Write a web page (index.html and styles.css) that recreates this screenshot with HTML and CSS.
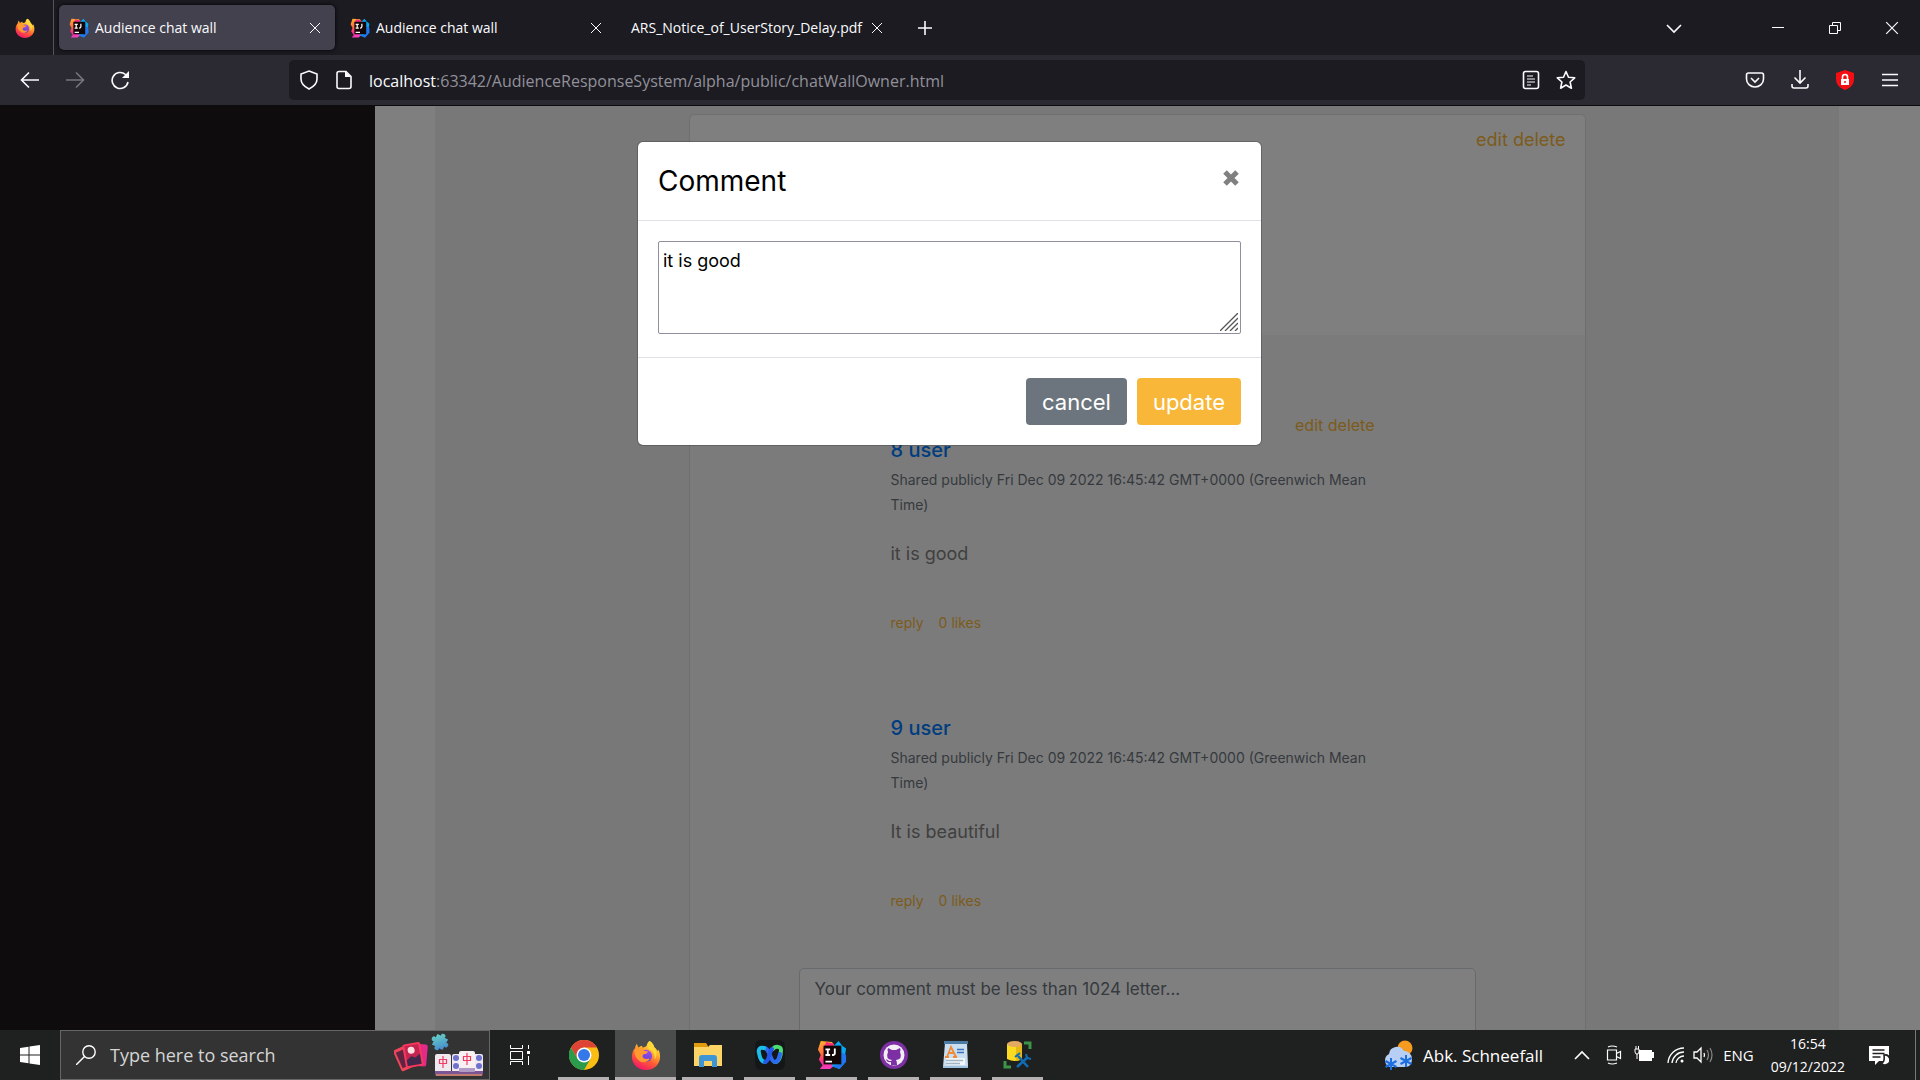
FILE: index.html
```html
<!DOCTYPE html>
<html lang="en">
<head>
<meta charset="utf-8">
<title>Audience chat wall</title>
<link rel="stylesheet" href="styles.css">
</head>
<body>
<svg class="defs" aria-hidden="true">
  <defs>
    <linearGradient id="ff-body" x1=".8" y1="0" x2=".3" y2="1"><stop offset="0" stop-color="#fff14a"/><stop offset=".35" stop-color="#ffb02e"/><stop offset=".65" stop-color="#ff5a36"/><stop offset="1" stop-color="#f0146b"/></linearGradient>
    <linearGradient id="ff-globe" x1=".7" y1="0" x2=".3" y2="1"><stop offset="0" stop-color="#a04cf0"/><stop offset="1" stop-color="#5a3fd0"/></linearGradient>
    <linearGradient id="ij-left" x1=".3" y1="0" x2=".4" y2="1"><stop offset="0" stop-color="#ffb02e"/><stop offset=".45" stop-color="#ff6a3d"/><stop offset=".7" stop-color="#fb2c8c"/><stop offset="1" stop-color="#f43fc0"/></linearGradient>
    <linearGradient id="puzzle" x1="0" y1="0" x2="1" y2="1"><stop offset="0" stop-color="#6fe0c4"/><stop offset="1" stop-color="#3c78d0"/></linearGradient>
    <symbol id="firefox" viewBox="0 0 32 32">
      <path fill="url(#ff-body)" d="M20 1c3 2 4 4 5 7 2 1 3 3 3 4l1-2c2 3 2 6 2 8 0 8-7 14-15 14S1 26 1 18c0-4 1-7 3-9l1-3 1-2 2 4c1-1 3-2 4-2 0 1 0 2 1 2 2-1 4-1 4-3 0-1 1-3 3-4z"/>
      <circle cx="16" cy="17" r="6.500" fill="url(#ff-globe)"/>
      <path fill="#ff9a2f" d="M4 10c3-2 6-2 8 0 1 1 3 2 6 2 0 2-2 3-4 3-2 1-2 3-1 4 2 2 5 1 7 1-2 4-8 5-11 2-4-3-6-7-5-12z"/>
      <path fill="#ffd83a" d="M20 1c3 2 4 4 5 7 3 4 3 9 0 13 1-5-1-9-5-11-3-2-3-6 0-9z"/>
    </symbol>
    <symbol id="intellij" viewBox="0 0 32 32">
      <path fill="url(#ij-left)" d="M4 1l12 1 4 6v18l-5 4-1 1H3l3-4-4-6 2-5-3-6z"/>
      <path fill="#fb2c7c" d="M10 2l8 2-1 6H6z"/>
      <path fill="#07a9f5" d="M18 6l5-5 4 5 4 3-1 7 1 7-7 8-8-3z"/>
      <path fill="#2175f3" d="M26 13l5 3v7l-7 8-8-3 10-3z"/>
      <path fill="#120607" d="M7 6h19v20H7z"/>
      <path stroke="#fff" fill="none" d="M9 10h5M11.500 10v6M9 16h5M19 9v5q0 2-3 2M9 23h7"/>
    </symbol>
    <symbol id="close" viewBox="0 0 12 12"><path d="M1 1l10 10M11 1L1 11" fill="none" stroke="currentColor"/></symbol>
  </defs>
</svg>

<header class="tabbar">
  <div class="fxview"><svg class="i20"><use href="#firefox"/></svg></div>
  <div class="tabs">
    <div class="tab active"><svg class="i20"><use href="#intellij"/></svg><span class="tabname">Audience chat wall</span><button class="tabclose" aria-label="Close tab"><svg class="i12"><use href="#close"/></svg></button></div>
    <div class="tab"><svg class="i20"><use href="#intellij"/></svg><span class="tabname">Audience chat wall</span><button class="tabclose" aria-label="Close tab"><svg class="i12"><use href="#close"/></svg></button></div>
    <div class="tab"><span class="tabname">ARS_Notice_of_UserStory_Delay.pdf</span><button class="tabclose" aria-label="Close tab"><svg class="i12"><use href="#close"/></svg></button></div>
  </div>
  <button class="iconbtn newtab" aria-label="New tab"><svg class="i16" viewBox="0 0 16 16"><path d="M8 1v14M1 8h14"/></svg></button>
  <button class="iconbtn alltabs" aria-label="List all tabs"><svg class="i16" viewBox="0 0 16 16"><path d="M1 5l7 7 7-7"/></svg></button>
  <div class="winbtns">
    <button class="iconbtn" aria-label="Minimize"><svg class="i12" viewBox="0 0 12 12"><path d="M0 5.500h12" stroke-width="1"/></svg></button>
    <button class="iconbtn" aria-label="Restore"><svg class="i12" viewBox="0 0 12 12"><path d="M.5 3.500h8v8h-8zM3.500 3V.5h8v8H9" stroke-width="1"/></svg></button>
    <button class="iconbtn" aria-label="Close window"><svg class="i14"><use href="#close"/></svg></button>
  </div>
</header>

<nav class="navbar">
  <button class="iconbtn" aria-label="Back"><svg class="i20" viewBox="0 0 20 20"><path d="M19 10H2M9 2.500L1.500 10 9 17.500"/></svg></button>
  <button class="iconbtn dim" aria-label="Forward"><svg class="i20" viewBox="0 0 20 20"><path d="M1 10h17M11 2.500l7.500 7.500-7.500 7.500"/></svg></button>
  <button class="iconbtn" aria-label="Reload"><svg class="i20" viewBox="0 0 20 20"><path d="M18 12a8 8 0 1 1-2.500-7.500L18 7"/><path d="M19 1v7h-7z" fill="currentColor" stroke="none"/></svg></button>
  <div class="spacer"></div>
  <div class="urlbar">
    <svg class="i20" viewBox="0 0 20 20"><path d="M10 1l8 3v5c0 5-4 8-8 10-4-2-8-5-8-10V4z"/></svg>
    <svg class="i20" viewBox="0 0 20 20"><path d="M5 1.500h7l5 5v10q0 2-2 2H5q-2 0-2-2v-13q0-2 2-2z"/><path d="M11 1l6 6h-6z" fill="currentColor" stroke="none"/></svg>
    <div class="url"><b>localhost</b>:63342/AudienceResponseSystem/alpha/public/chatWallOwner.html</div>
    <svg class="i20 reader" viewBox="0 0 20 20"><rect x="2.500" y="1.500" width="15" height="17" rx="2"/><path d="M6 6h6M6 9h8M6 12h8M6 15h4" stroke-width="1.200"/></svg>
    <svg class="i20" viewBox="0 0 20 20"><path d="M10 1.500l2.500 5.700 6.200.6-4.600 4.200 1.300 6.200-5.400-3.200-5.400 3.200 1.300-6.200L1.300 7.800l6.200-.6z" stroke-linejoin="round"/></svg>
  </div>
  <div class="spacer"></div>
  <button class="iconbtn" aria-label="Pocket"><svg class="i20" viewBox="0 0 20 20"><path d="M3.500 3h13q2 0 2 2v4a8.500 8 0 0 1-17 0V5q0-2 2-2zM6 8l4 4 4-4"/></svg></button>
  <button class="iconbtn" aria-label="Downloads"><svg class="i20" viewBox="0 0 20 20"><path d="M10 0v13M4.500 7.500L10 13l5.500-5.500M2 14v2q0 2 2 2h12q2 0 2-2v-2"/></svg></button>
  <button class="iconbtn" aria-label="Blocker"><svg class="i20" viewBox="0 0 20 20"><path d="M10 0l9 3v6c0 6-4 9-9 11-5-2-9-5-9-11V3z" fill="#f40d12" stroke="none"/><rect x="6" y="9" width="8" height="6" fill="#fff" stroke="none"/><path d="M7.500 9V7a2.500 2.500 0 0 1 5 0v2" stroke="#fff"/><circle cx="10" cy="12" r="1" fill="#f40d12" stroke="none"/></svg></button>
  <button class="iconbtn" aria-label="Menu"><svg class="i16" viewBox="0 0 16 16"><path d="M0 2.500h16M0 8h16M0 13.500h16"/></svg></button>
</nav>

<div class="viewport">
  <aside class="sidebar"></aside>
  <main class="content">
    <div class="wall">
      <article class="card">
        <div class="cardtop"><a href="#">edit</a> <a href="#">delete</a></div>
        <div class="comments">
          <section class="comment">
            <div class="actions"><a href="#">edit</a> <a href="#">delete</a></div>
            <h6 class="name">8 user</h6>
            <p class="meta">Shared publicly Fri Dec 09 2022 16:45:42 GMT+0000 (Greenwich Mean Time)</p>
            <p class="body">it is good</p>
            <div class="links"><a href="#">reply</a><a href="#">0 likes</a></div>
          </section>
          <section class="comment">
            <div class="actions"></div>
            <h6 class="name">9 user</h6>
            <p class="meta">Shared publicly Fri Dec 09 2022 16:45:42 GMT+0000 (Greenwich Mean Time)</p>
            <p class="body">It is beautiful</p>
            <div class="links"><a href="#">reply</a><a href="#">0 likes</a></div>
          </section>
          <textarea class="newcomment" aria-label="New comment" placeholder="Your comment must be less than 1024 letter..."></textarea>
        </div>
      </article>
    </div>
  </main>
  <div class="backdrop">
    <div class="modal" role="dialog" aria-labelledby="modal-title">
      <div class="modalhead"><h5 id="modal-title">Comment</h5><button class="modalclose" aria-label="Close"><svg class="i20" viewBox="0 0 20 20"><path d="M4 4l12 12M16 4L4 16" stroke-width="5"/></svg></button></div>
      <div class="modalbody">
        <div class="field"><textarea aria-label="Comment text">it is good</textarea><svg class="grip" viewBox="0 0 18 18"><path d="M0 18L18 0M5 18L18 5M10 18l8-8M15 18l3-3"/></svg></div>
      </div>
      <div class="modalfoot"><button class="btn grey">cancel</button><button class="btn amber">update</button></div>
    </div>
  </div>
</div>

<footer class="taskbar">
  <button class="start" aria-label="Start"><svg class="i20" viewBox="0 0 20 20"><path d="M0 3l8.500-1.200v7.700H0zM9.500 1.600L20 0v9.500H9.500zM0 10.500h8.500v7.700L0 17zM9.500 10.500H20V20L9.500 18.400z" fill="#fff" stroke="none"/></svg></button>
  <label class="search">
    <svg class="i20" viewBox="0 0 20 20"><circle cx="13" cy="7" r="6.200"/><path d="M8.500 11.500L0 20"/></svg>
    <input type="text" placeholder="Type here to search">
    <svg class="games" viewBox="0 0 90 44">
      <rect x="17" y="11" width="16" height="22" rx="2" fill="#e32a88" transform="rotate(5 25 22)"/>
      <rect x="3" y="14" width="15" height="23" rx="2" fill="#f0455a" transform="rotate(-24 10 26)"/><rect x="5" y="17" width="11" height="17" fill="#5e2442" transform="rotate(-24 10 26)"/>
      <g transform="rotate(-10 19 22)"><rect x="10" y="10" width="18" height="24" rx="2" fill="#f5395c"/><rect x="12" y="12" width="14" height="20" fill="#c42452"/><path d="M12 26l5-3 4 2 5-3v10H12z" fill="#40284a"/><circle cx="18" cy="17" r="3.500" fill="#ffdfe0"/></g>
      <g transform="rotate(28 46 9)" fill="url(#puzzle)"><path d="M40 3h4c-2-4 6-4 4 0h4v4c4-2 4 6 0 4v4h-4c2 4-6 4-4 0h-4v-4c-4 2-4-6 0-4z"/></g>
      <g fill="#efe8ee"><rect x="41" y="21" width="16" height="20" rx="2"/><rect x="58" y="21" width="14" height="20" rx="2"/><rect x="74" y="21" width="15" height="20" rx="2"/></g>
      <path d="M41 38h48v3q0 2-2 2H43q-2 0-2-2z" fill="#7c5594"/><path d="M42 42h46" stroke="#d98a60"/>
      <g fill="#6d72cf"><circle cx="62" cy="25" r="3"/><circle cx="62" cy="33" r="3"/><circle cx="85" cy="25" r="3"/><circle cx="85" cy="33" r="3"/></g>
      <rect x="65" y="18" width="16" height="20" rx="2" fill="#f7f1f4"/><path d="M65 35h16v3q0 1-1 1H66q-1 0-1-1z" fill="#b09ac6"/>
      <path d="M45.500 26.500h7v4h-7zM49 23v12M69.500 23.500h7v4h-7zM73 20v12" stroke="#ef3d66" stroke-width="1.200" fill="none"/>
    </svg>
  </label>
  <button class="taskview" aria-label="Task view"><svg class="i20" viewBox="0 0 20 20"><path d="M.5 0v3.500h12V0M.5 20v-3.500h12V20M.5 6.500h12v8H.5zM18.500 0v4M18.500 11v9" stroke-width="1"/><path d="M17 6h3v3h-3z" fill="#fff" stroke="none"/></svg></button>
  <div class="apps">
    <button class="app" aria-label="Chrome"><svg class="i30" viewBox="0 0 30 30"><circle cx="15" cy="15" r="15" fill="#fbbc14"/><path d="M2 7.500A15 15 0 0 1 28 7.500H15L8.500 18.700z" fill="#dd4436"/><path d="M2 7.500A15 15 0 0 0 15 30l6.500-11.300L15 22l-6.500-3.300z" fill="#2a9a4b"/><circle cx="15" cy="15" r="7.500" fill="#fff"/><circle cx="15" cy="15" r="6" fill="#3478ea"/></svg></button>
    <button class="app current" aria-label="Firefox"><svg class="i30"><use href="#firefox"/></svg></button>
    <button class="app" aria-label="File Explorer"><svg class="i30" viewBox="0 0 30 30"><path d="M1 3h12l2 3v4H1z" fill="#e19b0c"/><path d="M1 7h14l2-2h12v21H1z" fill="#fcd365"/><path d="M6 27V18q0-3 3-3h12q3 0 3 3v9h-5v-6h-8v6z" fill="#3e95d6"/></svg></button>
    <button class="app" aria-label="Webex"><svg class="i30" viewBox="0 0 30 30"><rect width="30" height="30" rx="6" fill="#151617"/><g fill="none" stroke-width="4" stroke-linecap="round"><path d="M18 9c2-3 8-3 8 1 0 6-2 12-6 12" stroke="#4bdc72"/><path d="M25 14c-1 5-2 8-5 8-5 0-5-14-11-14" stroke="#2b6bf3"/><path d="M9 8C5 7 3 9 4 13c1 6 3 9 6 9" stroke="#1bbde9"/><path d="M10 22c4 0 4-10 7-13" stroke="#2456e8"/></g></svg></button>
    <button class="app" aria-label="IntelliJ IDEA"><svg class="i30"><use href="#intellij"/></svg></button>
    <button class="app" aria-label="GitHub Desktop"><svg class="i30" viewBox="0 0 30 30"><circle cx="15" cy="15" r="14" fill="#7d2fa4"/><circle cx="15" cy="15" r="10.500" fill="#f3eef6"/><path d="M9 8l4 2h4l4-2q1 2 0 4 3 7-4 8 1 1 1 5h-6v-3q-4 1-5-3 2 1 3 2h2l1-1q-7-1-4-8-1-2 0-4z" fill="#7d2fa4"/></svg></button>
    <button class="app" aria-label="WordPad"><svg class="i30" viewBox="0 0 30 30"><path d="M4 3h22l1 23q-12 3-25 1z" fill="#c9dff1"/><path d="M3 1h24v3H3z" fill="#4b7aa5"/><path d="M6 17l4-10 5 10M8 13h5M4 17h4M12 17h4" fill="none" stroke="#f08a35" stroke-width="1.800"/><path d="M16 9.500h7M16 12.500h7" stroke="#3c72bd" stroke-width="1.500"/><path d="M5 18h19v7H5z" fill="#f2f7fb"/><path d="M5 20.500h17M5 23.500h14" stroke="#a3b4c2"/><path d="M2 26h25v2H2z" fill="#9fc2de"/></svg></button>
    <button class="app" aria-label="Database tool"><svg class="i30" viewBox="0 0 30 30"><path d="M4 4h15v15q-7 4-15 0z" fill="#fadb22"/><path d="M13 4h6v15q-3 2-6 2z" fill="#e6b912"/><ellipse cx="11.500" cy="4" rx="7.500" ry="3" fill="#e5aa62"/><path d="M21 3h6v6M2 21v6h6" fill="none" stroke="#3b9447" stroke-width="3"/><path d="M15 16l10 11M25 17L14 27" stroke="#0f6db8" stroke-width="2.500"/><path d="M12 17l5-4M23 14l1 4 4 1" fill="none" stroke="#0f6db8" stroke-width="2"/></svg></button>
  </div>
  <div class="tray">
    <svg class="i30 weather" viewBox="0 0 30 30"><circle cx="22" cy="8" r="7.500" fill="#f59b1f"/><path d="M7 27a7 7 0 0 1-1-13 8 8 0 0 1 15-3 8 8 0 0 1 8 8q0 7-6 8z" fill="#b8cff5"/><path d="M8 18v12M2.500 21l11 6M13.500 21l-11 6M23 15v12M17.500 18l11 6M28.500 18l-11 6" stroke="#1b6fe0" stroke-width="2"/></svg>
    <span class="forecast">Abk. Schneefall</span>
    <svg class="i16 up" viewBox="0 0 16 16"><path d="M1 12l7-7 7 7"/></svg>
    <svg class="i20 meet" viewBox="0 0 20 20"><path d="M3.500 5h9v10h-9zM12.500 8.500l4-2v7l-4-2M4 2q4-2 9 0M4 18q4 2 9 0" stroke-width="1.200"/></svg>
    <svg class="i20 battery" viewBox="0 0 20 20"><path d="M5 5h13v2h2v6h-2v3H5V9z" fill="#fff" stroke="none"/><path d="M1 4h4v3l-1 2H2L1 7zM3 9v5M2 4V1M4.500 4V1" stroke-width="1"/></svg>
    <svg class="i20 wifi" viewBox="0 0 20 20"><path d="M2 18A16 16 0 0 1 18 3M6 18A12 12 0 0 1 18 7M10 18a8 8 0 0 1 8-7" stroke-width="1.300"/><circle cx="16" cy="16" r="1.500" fill="#fff" stroke="none"/></svg>
    <svg class="i20 sound" viewBox="0 0 20 20"><path d="M1 7h3l4-4v14l-4-4H1zM11 8q1 2 0 4" stroke-width="1.300"/><path d="M14 5q3 5 0 10M17 3q4 7 0 14" stroke="#888" stroke-width="1.200"/></svg>
    <span class="lang">ENG</span>
    <time class="clock">16:54<br>09/12/2022</time>
    <svg class="i20 notes" viewBox="0 0 20 20"><path d="M0 1h20v15H10l-4 4v-4H0z" fill="#fff" stroke="none"/><path d="M3.500 5h12M3.500 8.500h12M3.500 12h8" stroke="#222"/><path d="M15 10a5 5 0 1 1-3 8q4 0 3-8z" fill="#fff" stroke="#222"/></svg>
  </div>
</footer>
</body>
</html>
```
FILE: styles.css
```css
* { box-sizing: border-box; }
body {
  margin: 0;
  height: 100vh;
  display: flex;
  flex-direction: column;
  overflow: hidden;
  font-family: "Open Sans", sans-serif;
  color: #fbfbfe;
  background: #1c1b22;
}
button { border: 0; padding: 0; background: none; color: inherit; font: inherit; }
a { color: #f8b739; text-decoration: none; }
h5, h6, p { margin: 0; }
svg { flex: none; fill: none; stroke: currentColor; stroke-width: 1.600; display: block; }
symbol path, symbol circle { stroke-width: 0; }
#intellij path[stroke] { stroke-width: 2; }
#close path { stroke-width: 1; }
.defs { position: absolute; width: 0; height: 0; }
.i12 { width: 12px; height: 12px; }
.i14 { width: 14px; height: 14px; }
.i16 { width: 16px; height: 16px; }
.i20 { width: 20px; height: 20px; }
.i30 { width: 30px; height: 30px; }

/* Tab strip */
.tabbar { display: flex; align-items: center; height: 55px; flex: none; background: #1c1b22; }
.fxview { height: 55px; width: 54px; padding-left: 15px; display: flex; align-items: center; border-right: 1px solid #54535b; }
.tabs { display: flex; gap: 5px; margin-left: 5px; }
.tab { width: 276px; height: 45px; padding: 0 8px 0 10px; display: flex; align-items: center; gap: 6px; border-radius: 5px; font-size: 14px; white-space: nowrap; }
.tab.active { background: #42414d; box-shadow: 0 0 4px #000; }
.tabname { flex: 1; min-width: 0; }
.tabclose { width: 24px; height: 24px; display: grid; place-items: center; flex: none; }
.iconbtn { display: grid; place-items: center; flex: none; width: 46px; height: 46px; }
.newtab { margin-left: 5px; }
.alltabs { margin-left: auto; margin-right: 52px; }
.winbtns { display: flex; }
.winbtns .iconbtn { width: 57px; }

/* Address bar */
.navbar { display: flex; align-items: center; height: 51px; flex: none; padding: 0 8px 0 7px; background: #2b2a33; border-bottom: 1px solid #0c0c0d; }
.navbar .iconbtn { width: 45px; }
.dim { color: #77767e; }
.spacer { width: 147px; flex: none; }
.urlbar { flex: 1; min-width: 0; display: flex; align-items: center; gap: 15px; height: 40px; padding: 0 9px 0 10px; border-radius: 5px; background: #1c1b22; }
.url { flex: 1; padding-top: 2px; font-size: 16px; color: #929199; white-space: nowrap; overflow: hidden; }
.url b { font-weight: 400; color: #fbfbfe; }

/* Page */
.viewport { position: relative; display: flex; flex: 1; min-height: 0; overflow: hidden; font-family: Inter, sans-serif; background: #fff; }
.sidebar { width: 375px; flex: none; background: #1c181b; }
.content { flex: 1; padding: 0 81px 0 60px; }
.wall { min-height: 100%; padding: 8px 0; background: #f0f0f0; }
.card { max-width: 897px; margin: 0 auto; border: 1px solid #dfdfdf; border-radius: 5px; background: #f7f7f7; }
.cardtop { height: 220px; padding: 11px 19px; background: #fff; border-radius: 5px 5px 0 0; text-align: right; font-size: 18px; line-height: 28px; }
.comments { padding: 77px 109px 80px; }
.comment { margin: 0 101px 55px 92px; }
.actions { height: 24px; font-size: 16px; line-height: 26px; text-align: right; }
.name { font-size: 20px; line-height: 28px; font-weight: 500; color: #007bff; }
.meta { font-size: 14px; line-height: 25px; padding-top: 3px; color: #6c757d; }
.body { padding: 23px 0 42px; font-size: 18px; line-height: 28px; color: #808080; }
.links { display: flex; gap: 15px; font-size: 14px; line-height: 25px; }
.newcomment { display: block; width: 100%; height: 120px; padding: 6px 15px; border: 1px solid #ced4da; border-radius: 5px; background: #fff; font: 17px/28px Inter, sans-serif; resize: none; }
.newcomment::placeholder { color: #6c757d; opacity: 1; }

/* Dialog */
.backdrop { position: absolute; inset: 0; display: flex; justify-content: center; align-items: flex-start; padding: 35px 21px 0 0; background: rgba(0, 0, 0, .5); }
.modal { width: 625px; background: #fff; background-clip: padding-box; border: 1px solid rgba(0, 0, 0, .2); border-radius: 6px; color: #000; }
.modalhead { display: flex; justify-content: space-between; align-items: flex-start; height: 79px; padding: 20px; border-bottom: 1px solid #dee2e6; }
.modalhead h5 { font-size: 28px; line-height: 38px; font-weight: 400; }
.modalclose { color: #808080; width: 20px; height: 31px; display: grid; place-items: center; }
.modalbody { padding: 20px 20px 23px; }
.field { position: relative; }
.field textarea { display: block; width: 100%; height: 93px; padding: 4px; border: 1px solid #8f8f9d; border-radius: 2px; background: #fff; font: 18px/30px Inter, sans-serif; color: #000; resize: none; }
.grip { position: absolute; right: 3px; bottom: 3px; width: 18px; height: 18px; color: #555; stroke-width: 1.300; }
.modalfoot { display: flex; justify-content: flex-end; gap: 10px; padding: 20px; border-top: 1px solid #dee2e6; }
.btn { height: 47px; padding: 0 16px; border-radius: 4px; color: #fff; font-size: 22px; }
.grey { background: #6c757d; }
.amber { background: #f8b739; }

/* Task bar */
.taskbar { display: flex; height: 50px; flex: none; background: #1f2020; color: #fff; }
.start { width: 60px; display: grid; place-items: center; }
.search { display: flex; align-items: center; gap: 14px; width: 430px; padding: 0 5px 0 15px; border: 1px solid #666; background: #333; }
.search > .i20 { stroke-width: 1.400; }
.search input { flex: 1; min-width: 0; padding: 0; border: 0; outline: 0; background: none; color: #ddd; font: 18px "Open Sans", sans-serif; }
.search input::placeholder { color: #d5d5d5; opacity: 1; }
.games { width: 90px; height: 44px; stroke: none; }
.taskview { width: 60px; margin-right: 3px; display: grid; place-items: center; }
.apps { display: flex; gap: 1px; }
.apps svg { stroke: none; }
.app { width: 61px; display: grid; place-items: center; background: linear-gradient(#b5b0b2, #b5b0b2) center bottom / 51px 3px no-repeat; }
.app.current { background-color: #4b4c4c; background-size: 61px 3px; }
.tray { flex: 1; display: flex; align-items: center; justify-content: flex-end; margin-right: 4px; padding-right: 26px; border-right: 1px solid #777; }
.weather { stroke: none; margin-right: 10px; }
.forecast { font-size: 17px; margin-right: 31px; }
.up { margin-right: 14px; }
.meet, .sound { margin-right: 10px; }
.battery { margin-right: 12px; }
.wifi { margin-right: 7px; }
.lang { font-size: 15px; margin-right: 17px; }
.clock { font-size: 14px; line-height: 23px; text-align: center; margin-right: 24px; }
```
